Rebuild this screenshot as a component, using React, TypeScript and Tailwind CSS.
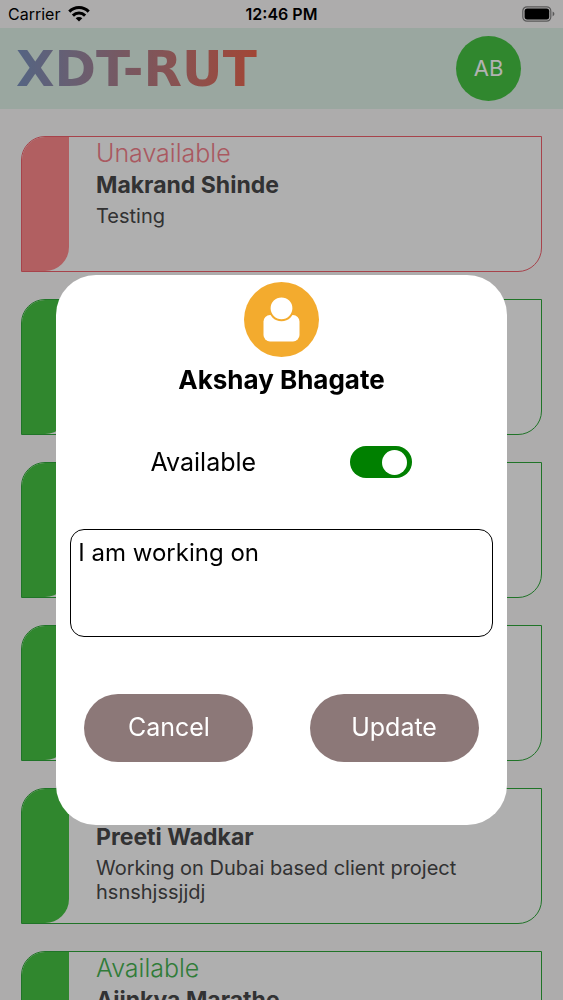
import { useState } from "react"
import clsx from "clsx"

interface Member {
  id: number
  available: boolean
  name?: string
  task?: string
}

const MEMBERS: Member[] = [
  { id: 1, available: false, name: "Makrand Shinde", task: "Testing" },
  { id: 2, available: true },
  { id: 3, available: true },
  { id: 4, available: true },
  { id: 5, available: true, name: "Preeti Wadkar", task: "Working on Dubai based client project hsnshjssjjdj" },
  { id: 6, available: true, name: "Ajinkya Marathe" },
]

function WifiIcon() {
  return (
    <svg width="22" height="16" viewBox="0 0 22 16" fill="none" stroke="black" strokeWidth="3">
      <path d="M1.3 5.6a13.6 13.6 0 0 1 19.4 0" />
      <path d="M4.9 9.6a8.6 8.6 0 0 1 12.2 0" />
      <path d="M11 15.6 7.7 12.3a4.7 4.7 0 0 1 6.6 0z" fill="black" stroke="none" />
    </svg>
  )
}

function BatteryIcon() {
  return (
    <svg width="33" height="16" viewBox="0 0 33 16" fill="none">
      <rect x="0.8" y="0.8" width="28" height="14.4" rx="4.2" stroke="#808080" strokeWidth="1.2" />
      <rect x="2.6" y="2.6" width="24.6" height="10.8" rx="2.6" fill="black" />
      <path d="M30.6 5.6c2.4 1 2.4 3.8 0 4.8z" fill="#808080" />
    </svg>
  )
}

function StatusBar() {
  return (
    <div className="grid h-7 shrink-0 grid-cols-3 items-center px-2 text-base text-black">
      <div className="flex items-center gap-2">
        <span>Carrier</span>
        <WifiIcon />
      </div>
      <span className="text-center font-semibold">12:46 PM</span>
      <div className="flex justify-end">
        <BatteryIcon />
      </div>
    </div>
  )
}

function Header() {
  return (
    <header className="flex shrink-0 items-center justify-between bg-[#ddf0e6] py-2 pr-[42px] pl-4">
      <span className="bg-linear-to-r from-[#7890bc] via-[#b07c86] to-[#e8644c] bg-clip-text font-['DejaVu_Sans',sans-serif] text-[50px] leading-none font-bold text-transparent">
        XDT-RUT
      </span>
      <button type="button" className="size-[65px] rounded-full bg-[#46c243] text-[22px] text-white">
        AB
      </button>
    </header>
  )
}

function MemberCard({ member }: { member: Member }) {
  return (
    <li
      className={clsx(
        "flex h-[136px] shrink-0 overflow-hidden rounded-tl-3xl rounded-br-3xl border bg-[#fbfbfb]",
        member.available ? "border-[#2fa63a] text-[#46b251]" : "border-[#f0606c] text-[#f3808a]",
      )}
    >
      <div className={clsx("w-[47px] shrink-0 rounded-br-3xl", member.available ? "bg-[#46c243]" : "bg-[#fe888b]")} />
      <div className="pr-12 pl-[27px]">
        <p className="text-[25px] leading-8 font-light">{member.available ? "Available" : "Unavailable"}</p>
        <p className="text-[23px] leading-8 font-bold text-[#484849]">{member.name}</p>
        <p className="mt-[3px] text-xl leading-6 text-[#484849]">{member.task}</p>
      </div>
    </li>
  )
}

function ProfileIcon() {
  return (
    <svg width="75" height="75" viewBox="0 0 75 75">
      <circle cx="37.5" cy="37.5" r="37.5" fill="#f3ab2e" />
      <rect x="19.5" y="33" width="36" height="26.5" rx="6.5" fill="white" />
      <circle cx="37.5" cy="26.3" r="11.9" fill="white" stroke="#f3ab2e" strokeWidth="2" />
    </svg>
  )
}

function StatusDialog() {
  const [available, setAvailable] = useState(true)
  const [task, setTask] = useState("I am working on")

  return (
    <div className="fixed inset-0 flex items-start justify-center bg-black/30 pt-[275px]">
      <div
        role="dialog"
        aria-labelledby="dialog-name"
        className="flex w-4/5 flex-col rounded-[40px] bg-white pt-[7px] pb-[63px]"
      >
        <div className="flex flex-col items-center gap-[7px]">
          <ProfileIcon />
          <h2 id="dialog-name" className="text-[26px] leading-8 font-bold text-black">
            Akshay Bhagate
          </h2>
        </div>
        <div className="mt-12 flex items-center justify-evenly">
          <label htmlFor="available" className="text-[25px] leading-9 text-black">
            Available
          </label>
          <input
            id="available"
            type="checkbox"
            role="switch"
            checked={available}
            onChange={(e) => setAvailable(e.target.checked)}
            className="flex h-8 w-[62px] appearance-none items-center rounded-full bg-gray-300 px-[5px] before:size-[25px] before:rounded-full before:bg-white checked:justify-end checked:bg-[#008000]"
          />
        </div>
        <textarea
          aria-label="Current work"
          value={task}
          onChange={(e) => setTask(e.target.value)}
          className="mx-3.5 mt-[49px] h-[108px] resize-none rounded-[14px] border border-black p-[7px] text-2xl leading-8 text-black outline-none"
        />
        <div className="mt-[57px] flex justify-around">
          <button type="button" className="h-[68px] w-3/8 rounded-full bg-[#8c7878] text-[25px] text-white">
            Cancel
          </button>
          <button type="button" className="h-[68px] w-3/8 rounded-full bg-[#8c7878] text-[25px] text-white">
            Update
          </button>
        </div>
      </div>
    </div>
  )
}

export default function App() {
  return (
    <div className="flex h-screen flex-col overflow-hidden bg-[#f8f6f7] font-[Inter,sans-serif]">
      <StatusBar />
      <Header />
      <ul className="flex flex-1 flex-col gap-[27px] overflow-y-auto px-[21px] pt-[27px] [scrollbar-width:none]">
        {MEMBERS.map((member) => (
          <MemberCard key={member.id} member={member} />
        ))}
      </ul>
      <StatusDialog />
    </div>
  )
}
